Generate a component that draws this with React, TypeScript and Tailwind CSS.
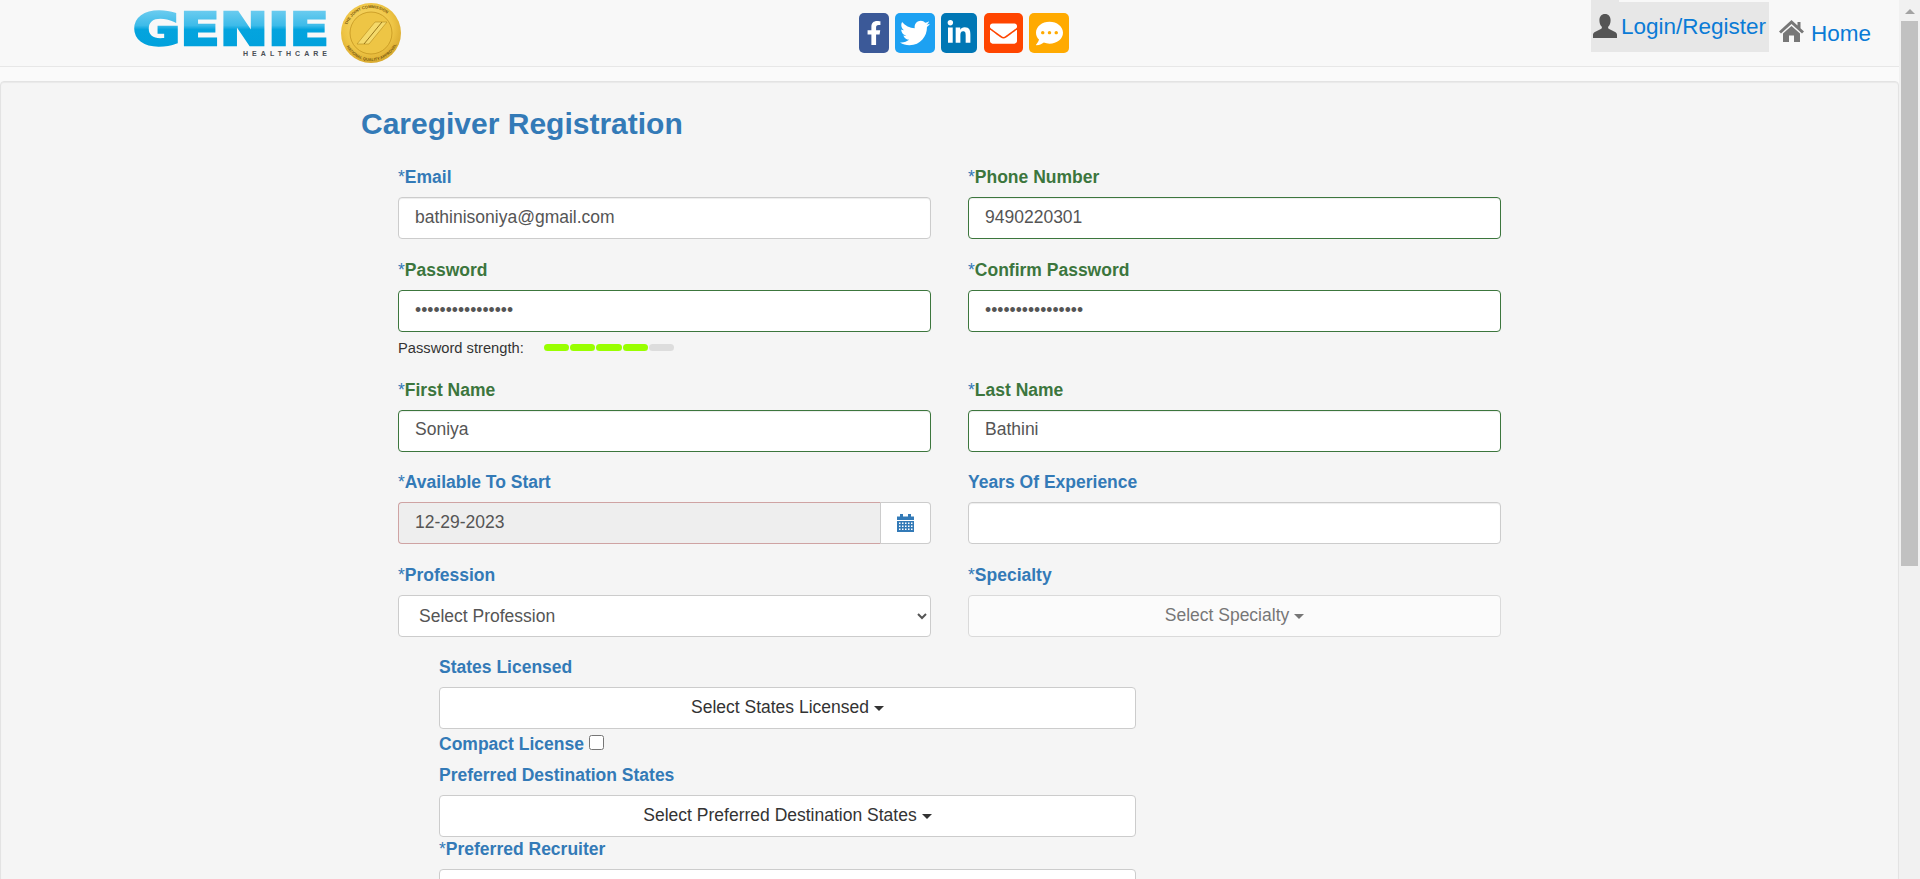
import { FaFacebookF, FaTwitter, FaLinkedinIn, FaEnvelope, FaCommentDots } from 'react-icons/fa';

const font = "font-['Liberation_Sans',Arial,sans-serif]";

function GenieLogo() {
  return (
    <svg width="269" height="66" viewBox="-2 0 269 66" className="block shrink-0">
      <defs>
        <linearGradient id="genieFill" x1="0" y1="0" x2="0" y2="1">
          <stop offset="0" stopColor="#7fd3f2" />
          <stop offset="0.42" stopColor="#3dbbe9" />
          <stop offset="0.5" stopColor="#04a4de" />
          <stop offset="1" stopColor="#00a0dc" />
        </linearGradient>
        <radialGradient id="sealFill" cx="0.45" cy="0.4" r="0.7">
          <stop offset="0" stopColor="#fbe27a" />
          <stop offset="0.6" stopColor="#eec444" />
          <stop offset="1" stopColor="#cf9d24" />
        </radialGradient>
        <path id="sealTop" d="M 211 33 A 25 25 0 0 1 261 33" />
        <path id="sealBottom" d="M 208 33 A 28 28 0 0 0 264 33" />
      </defs>
      <text
        x="-2"
        y="45"
        textLength="196"
        lengthAdjust="spacingAndGlyphs"
        fontFamily="'DejaVu Sans', sans-serif"
        fontWeight="700"
        fontSize="44"
        fill="url(#genieFill)"
        stroke="url(#genieFill)"
        strokeWidth="2.5"
      >
        GENIE
      </text>
      <text
        x="108"
        y="56"
        textLength="84"
        fontFamily="'Liberation Sans', Arial, sans-serif"
        fontSize="7"
        fontWeight="700"
        fill="#4a4f55"
      >
        HEALTHCARE
      </text>
      <circle cx="236" cy="33" r="30" fill="url(#sealFill)" />
      <circle cx="236" cy="33" r="21" fill="#eec545" stroke="#c4951f" strokeWidth="0.8" />
      <path d="M222 44 L240 22 H252 L234 44 Z" fill="#f5da6a" stroke="#b48a1c" strokeWidth="0.6" />
      <path d="M229 44 L247 22" stroke="#8d6a12" strokeWidth="0.9" fill="none" />
      <text fontSize="4" fill="#7a5a10" fontFamily="'Liberation Sans', Arial, sans-serif" fontWeight="700">
        <textPath href="#sealTop" startOffset="8">
          THE JOINT COMMISSION
        </textPath>
      </text>
      <text fontSize="4" fill="#7a5a10" fontFamily="'Liberation Sans', Arial, sans-serif" fontWeight="700">
        <textPath href="#sealBottom" startOffset="14">
          NATIONAL QUALITY APPROVAL
        </textPath>
      </text>
    </svg>
  );
}

function UserIcon() {
  return (
    <svg width="24" height="24" viewBox="0 0 24 24" className="block shrink-0" fill="#555555">
      <path d="M12 0c3.600 0 5.600 2.600 5.600 6.200 0 2.600-.9 5-2.200 6.400-.5.6-.4 1.700.3 2.100l6.400 3.200c1.200.6 1.900 1.600 1.900 2.800V24H0v-3.300c0-1.200.7-2.200 1.900-2.800l6.400-3.200c.7-.4.8-1.500.3-2.100C7.300 11.200 6.400 8.800 6.400 6.200 6.400 2.600 8.400 0 12 0z" />
    </svg>
  );
}

function HomeIcon() {
  return (
    <svg width="25" height="22" viewBox="0 0 25 22" className="block shrink-0" fill="#777777">
      <path d="M12.500 0 L18.500 5.500 V2 H21.500 V8.300 L25 11.500 L23 13.500 L12.500 4 L2 13.500 L0 11.500 Z" />
      <path d="M12.500 6 L21 13.500 V22 H15 V15.500 H10 V22 H4 V13.500 Z" />
    </svg>
  );
}

function CalendarIcon() {
  return (
    <svg width="17" height="18" viewBox="0 0 17 18" className="block" fill="#337ab7">
      <rect x="3" y="0" width="3" height="3" />
      <rect x="11" y="0" width="3" height="3" />
      <path d="M0 2.500h17V6H0z" />
      <path
        fillRule="evenodd"
        d="M0 7h17v11H0zM2 8.500v1.500h1.500V8.500zM5 8.500v1.500h1.500V8.500zM8 8.500v1.500h1.500V8.500zM11 8.500v1.500h1.500V8.500zM14 8.500v1.500h1.500V8.500zM2 11.500V13h1.500v-1.500zM5 11.500V13h1.500v-1.500zM8 11.500V13h1.500v-1.500zM11 11.500V13h1.500v-1.500zM14 11.500V13h1.500v-1.500zM2 14.500V16h1.500v-1.500zM5 14.500V16h1.500v-1.500zM8 14.500V16h1.500v-1.500zM11 14.500V16h1.500v-1.500zM14 14.500V16h1.500v-1.500z"
      />
    </svg>
  );
}

function Caret() {
  return <span className="inline-block w-0 h-0 ml-[5px] align-middle border-x-[5px] border-t-[5px] border-x-transparent border-t-[#333333]" />;
}

function FieldLabel({ text, required, ok }: { text: string; required?: boolean; ok?: boolean }) {
  return (
    <label className={`block h-[30px] pb-[10px] text-[17.5px] leading-[20px] font-bold ${ok ? 'text-[#3c763d]' : 'text-[#337ab7]'}`}>
      {required && <span className="font-normal text-[#337ab7]">*</span>}
      {text}
    </label>
  );
}

function TextField({ label, value, required, ok, type = 'text' }: { label: string; value: string; required?: boolean; ok?: boolean; type?: string }) {
  return (
    <div className="pb-[20.5px]">
      <FieldLabel text={label} required={required} ok={ok} />
      <input
        type={type}
        defaultValue={value}
        className={`block w-full h-[42px] px-4 pb-[2px] text-[17.5px] text-[#555555] bg-white border rounded shadow-[inset_0_1px_1px_rgba(0,0,0,0.075)] outline-none ${ok ? 'border-[#3c763d]' : 'border-[#cccccc]'}`}
      />
    </div>
  );
}

export default function App() {
  return (
    <div className={`flex w-[1920px] h-[879px] overflow-hidden bg-[#fafafa] ${font}`}>
      <div className="w-[1899px] shrink-0">
        {/* Navbar */}
        <nav className="flex h-[67px] pl-[133px] bg-[#f8f8f8] border-b border-[#e7e7e7]">
          <GenieLogo />
          <div className="flex ml-[457px] mt-[13px] h-[40px] text-white">
            <a className="flex items-center justify-center w-[30px] rounded-[5px] bg-[#3b5998]">
              <FaFacebookF size={24} />
            </a>
            <a className="flex items-center justify-center w-[40px] ml-[6px] rounded-[5px] bg-[#1da1f2]">
              <FaTwitter size={30} />
            </a>
            <a className="flex items-center justify-center w-[36px] ml-[6px] rounded-[5px] bg-[#0077b5]">
              <FaLinkedinIn size={26} />
            </a>
            <a className="flex items-center justify-center w-[39px] ml-[7px] rounded-[5px] bg-[#ff4500]">
              <FaEnvelope size={27} />
            </a>
            <a className="flex items-center justify-center w-[40px] ml-[6px] rounded-[5px] bg-[#ffaa00]">
              <FaCommentDots size={27} />
            </a>
          </div>
          <a className="relative flex items-center self-start w-[178px] h-[50px] ml-[522px] mt-[2px] pl-[2px] bg-[#e7e7e7] text-[22.5px] text-[#0a7bd6]">
            <span className="absolute -top-[2px] left-0 w-[28px] h-[2px] bg-[#e7e7e7]" />
            <span className="-mt-[2px]">
              <UserIcon />
            </span>
            <span className="ml-[4px]">Login/Register</span>
          </a>
          <a className="flex items-center self-start h-[24px] ml-[10px] mt-[19px] text-[22.5px] text-[#0a7bd6]">
            <HomeIcon />
            <span className="ml-[7px] mt-[6px]">Home</span>
          </a>
        </nav>

        {/* Registration panel */}
        <main className="mt-[14px] h-[900px] pt-[22px] bg-[#f5f5f5] border border-[#e3e3e3] rounded shadow-[inset_0_1px_1px_rgba(0,0,0,0.05)]">
          <h3 className="ml-[360px] h-[40px] mb-[23px] text-[30px] leading-[40px] font-bold text-[#337ab7]">Caregiver Registration</h3>

          <div className="grid grid-cols-2 gap-x-[37px] w-[1103px] ml-[397px]">
            <TextField label="Email" value="bathinisoniya@gmail.com" required />
            <TextField label="Phone Number" value="9490220301" required ok />

            <div className="h-[120px]">
              <FieldLabel text="Password" required ok />
              <input
                type="password"
                defaultValue="soniyabathini123"
                className="block w-full h-[42px] px-4 text-[17.5px] text-[#555555] bg-white border border-[#3c763d] rounded outline-none"
              />
              <div className="flex items-center mt-[7px] text-[14.7px] leading-[18px] text-[#333333]">
                <span className="w-[146px]">Password strength:</span>
                <div className="flex gap-px">
                  <span className="w-[25.2px] h-[7px] rounded-sm bg-[#99ff00]" />
                  <span className="w-[25.2px] h-[7px] rounded-sm bg-[#99ff00]" />
                  <span className="w-[25.2px] h-[7px] rounded-sm bg-[#99ff00]" />
                  <span className="w-[25.2px] h-[7px] rounded-sm bg-[#99ff00]" />
                  <span className="w-[25.2px] h-[7px] rounded-sm bg-[#dddddd]" />
                </div>
              </div>
            </div>
            <div>
              <FieldLabel text="Confirm Password" required ok />
              <input
                type="password"
                defaultValue="soniyabathini123"
                className="block w-full h-[42px] px-4 text-[17.5px] text-[#555555] bg-white border border-[#3c763d] rounded outline-none"
              />
            </div>

            <TextField label="First Name" value="Soniya" required ok />
            <TextField label="Last Name" value="Bathini" required ok />

            <div className="pb-[20.5px]">
              <FieldLabel text="Available To Start" required />
              <div className="flex h-[42px]">
                <input
                  readOnly
                  defaultValue="12-29-2023"
                  className="w-[483px] h-full px-4 pb-[2px] text-[17.5px] text-[#555555] bg-[#eeeeee] border border-[#cfa3a3] border-r-[#cccccc] rounded-l outline-none"
                />
                <span className="flex flex-1 items-center justify-center bg-white border border-l-0 border-[#cccccc] rounded-r">
                  <CalendarIcon />
                </span>
              </div>
            </div>
            <TextField label="Years Of Experience" value="" />

            <div className="pb-[20.5px]">
              <FieldLabel text="Profession" required />
              <select className="block w-full h-[42px] px-4 text-[17.5px] text-[#555555] bg-white border border-[#cccccc] rounded outline-none">
                <option>Select Profession</option>
              </select>
            </div>
            <div>
              <FieldLabel text="Specialty" required />
              <button className="block w-full h-[42px] text-[17.5px] text-[#333333] opacity-65 bg-white border border-[#cccccc] rounded">
                Select Specialty
                <Caret />
              </button>
            </div>
          </div>

          <div className="w-[697px] ml-[438px]">
            <FieldLabel text="States Licensed" />
            <button className="block w-full h-[42px] pb-[2px] text-[17.5px] text-[#333333] bg-white border border-[#cccccc] rounded">
              Select States Licensed
              <Caret />
            </button>
            <div className="flex items-start h-[36px] pt-[5px] text-[17.5px] leading-[20px] font-bold text-[#337ab7]">
              Compact License
              <input type="checkbox" className="w-[15px] h-[15px] ml-[5px] mt-px" />
            </div>
            <FieldLabel text="Preferred Destination States" />
            <button className="block w-full h-[42px] pb-[2px] text-[17.5px] text-[#333333] bg-white border border-[#cccccc] rounded">
              Select Preferred Destination States
              <Caret />
            </button>
            <div className="mt-[1.5px]">
              <FieldLabel text="Preferred Recruiter" required />
            </div>
            <div className="h-[42px] bg-white border border-[#cccccc] rounded" />
          </div>
        </main>
      </div>

      {/* Scrollbar */}
      <aside className="flex-1 pl-[2px] pr-[2px] bg-[#f1f1f1]">
        <div className="flex justify-center h-[21px] pt-[9px]">
          <span className="w-0 h-0 border-x-[5px] border-b-[5px] border-x-transparent border-b-[#a3a3a3]" />
        </div>
        <div className="h-[545px] bg-[#c1c1c1]" />
      </aside>
    </div>
  );
}
